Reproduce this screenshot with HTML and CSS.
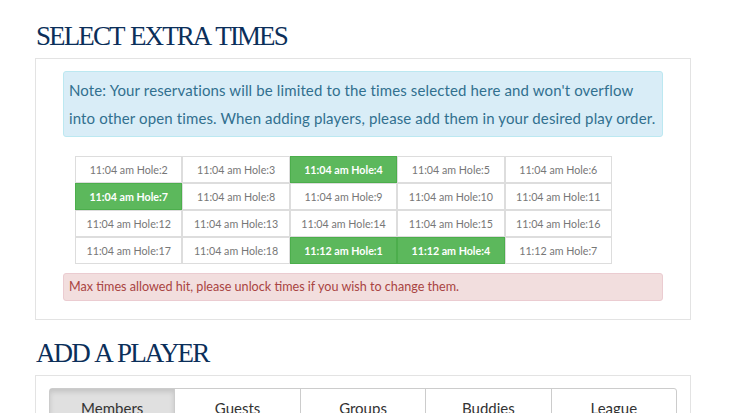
FILE: index.html
```html
<!DOCTYPE html>
<html lang="en">
  <head>
    <meta charset="UTF-8" />
    <title>Select Extra Times</title>
    <link rel="stylesheet" href="styles.css">
  </head>
  <body>
    <div class="page">
      <h2 class="section-title">SELECT EXTRA TIMES</h2>
      <div class="panel">
        <div class="alert alert-info">
          Note: Your reservations will be limited to the times selected here and won't overflow<br>
          into other open times. When adding players, please add them in your desired play order.
        </div>
        <div class="times">
          <div class="time">11:04 am Hole:2</div>
          <div class="time">11:04 am Hole:3</div>
          <div class="time selected">11:04 am Hole:4</div>
          <div class="time">11:04 am Hole:5</div>
          <div class="time">11:04 am Hole:6</div>
          <div class="time selected">11:04 am Hole:7</div>
          <div class="time">11:04 am Hole:8</div>
          <div class="time">11:04 am Hole:9</div>
          <div class="time">11:04 am Hole:10</div>
          <div class="time">11:04 am Hole:11</div>
          <div class="time">11:04 am Hole:12</div>
          <div class="time">11:04 am Hole:13</div>
          <div class="time">11:04 am Hole:14</div>
          <div class="time">11:04 am Hole:15</div>
          <div class="time">11:04 am Hole:16</div>
          <div class="time">11:04 am Hole:17</div>
          <div class="time">11:04 am Hole:18</div>
          <div class="time selected">11:12 am Hole:1</div>
          <div class="time selected">11:12 am Hole:4</div>
          <div class="time">11:12 am Hole:7</div>
        </div>
        <div class="alert alert-danger">
          Max times allowed hit, please unlock times if you wish to change them.
        </div>
      </div>

      <h2 class="section-title">ADD A PLAYER</h2>
      <div class="panel panel-players">
        <div class="tabs">
          <div class="tab active">Members</div>
          <div class="tab">Guests</div>
          <div class="tab">Groups</div>
          <div class="tab">Buddies</div>
          <div class="tab">League</div>
        </div>
      </div>
    </div>
  </body>
</html>
```
FILE: styles.css
```css
body {
  font-family: "Lato", "Liberation Sans", sans-serif;
  background-color: #fff;
  color: #333;
  margin: 0;
  padding: 0;
}

.page {
  width: 656px;
  margin-left: 35px;
  padding-top: 19px;
}

.section-title {
  font-family: "Liberation Serif", serif;
  font-weight: normal;
  font-size: 27px;
  letter-spacing: -1.9px;
  word-spacing: 2px;
  color: #0b2f5a;
  margin: 0 0 5px 1px;
  line-height: 34px;
}

.panel {
  border: 1px solid #e3e3e3;
  padding: 12px 27px 18px 27px;
  margin-bottom: 16px;
}

.alert {
  border: 1px solid transparent;
  border-radius: 3px;
}

.alert-info {
  background-color: #d9edf7;
  border-color: #bce8f1;
  color: #31708f;
  font-size: 15px;
  letter-spacing: 0.13px;
  line-height: 28px;
  white-space: nowrap;
  padding: 4px 5px 4px 5px;
}

.times {
  display: grid;
  grid-template-columns: repeat(5, 107.4px);
  margin: 19px 0 9px 12px;
  width: 537px;
}

.time {
  height: 25px;
  border: 1px solid #ddd;
  font-size: 10.7px;
  color: #777;
  display: flex;
  align-items: center;
  justify-content: center;
}

.time.selected {
  background-color: #5cb85c;
  border-color: #4cae4c;
  color: #fff;
  font-weight: bold;
}

.alert-danger {
  background-color: #f2dede;
  border-color: #ebccd1;
  color: #a94442;
  font-size: 12.6px;
  line-height: 26px;
  padding: 0 5px;
}

.panel-players {
  padding: 12px 13px 20px 13px;
}

.tabs {
  display: flex;
  border: 1px solid #ccc;
  border-radius: 3px;
}

.tab {
  flex: 1;
  text-align: center;
  font-size: 15px;
  padding: 10px 0;
  border-left: 1px solid #ccc;
  color: #333;
}

.tab:first-child {
  border-left: none;
}

.tab.active {
  background-color: #e0e0e0;
  box-shadow: inset 0 3px 5px rgba(0, 0, 0, 0.125);
}
```
